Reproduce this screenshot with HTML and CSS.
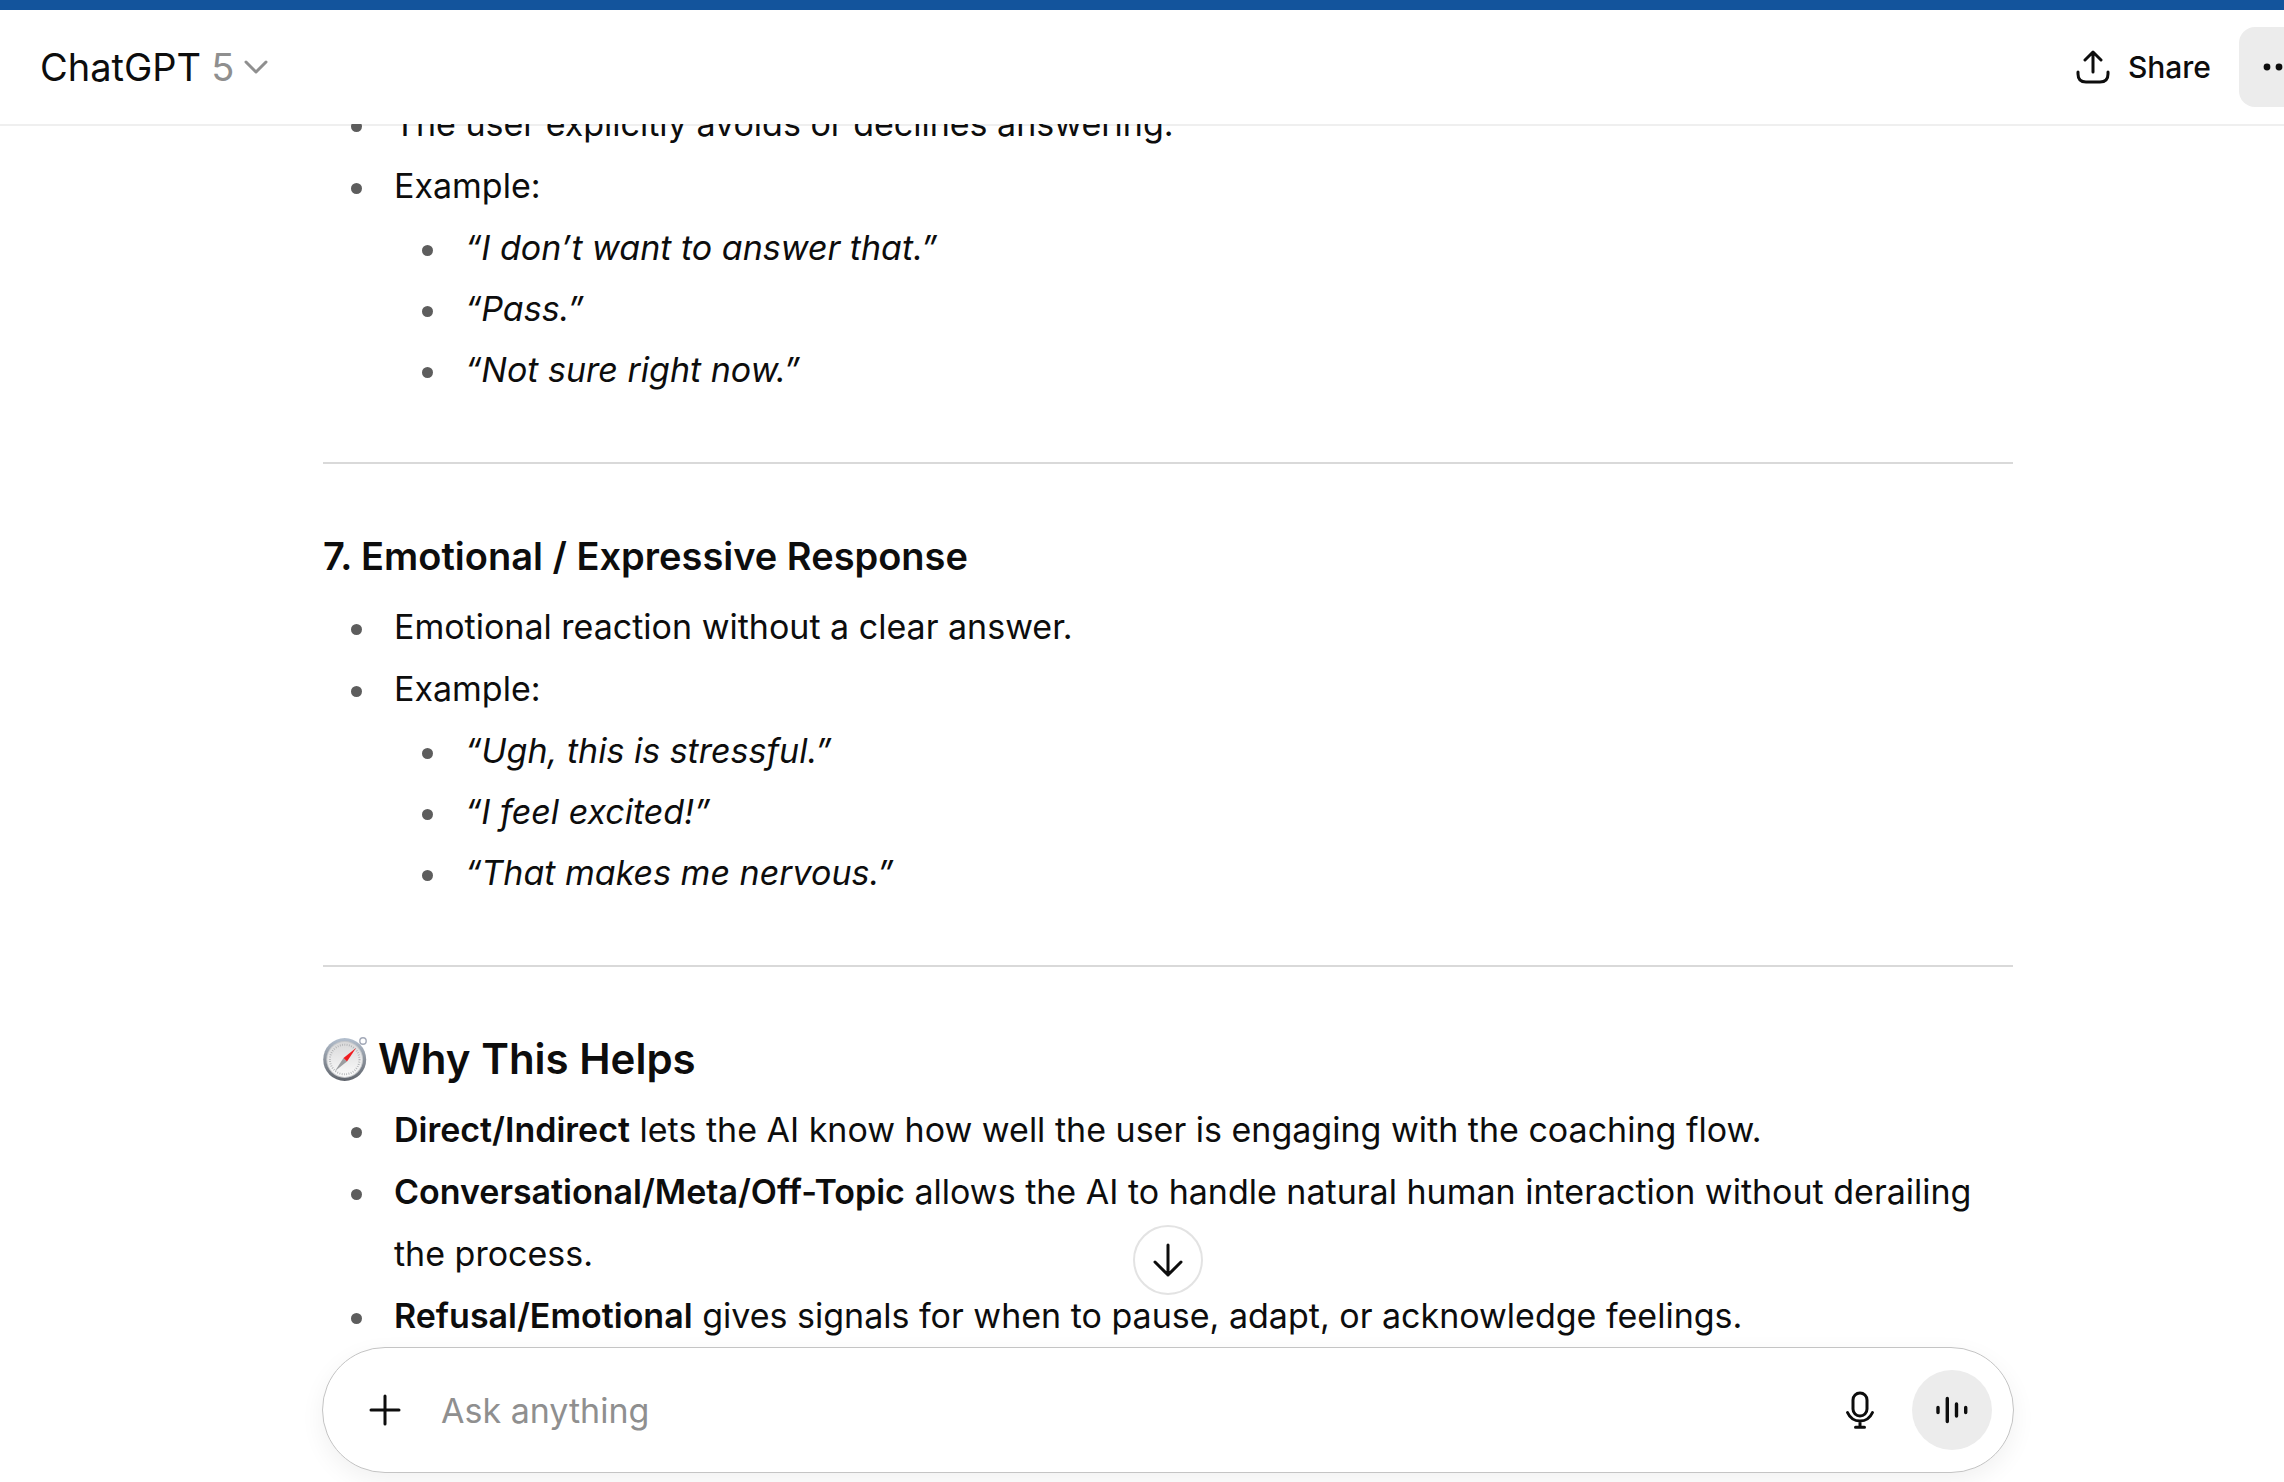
FILE: index.html
```html
<!DOCTYPE html>
<html lang="en">
<head>
<meta charset="utf-8">
<title>ChatGPT</title>
<link rel="stylesheet" href="styles.css">
</head>
<body>
<div class="app">
  <header class="topbar">
    <button class="model" type="button">
      <span>ChatGPT</span>
      <span class="model-version">5</span>
      <svg class="chevron" width="24" height="14" viewBox="0 0 24 14" fill="none" stroke="currentColor" stroke-width="3" stroke-linecap="round" stroke-linejoin="round" aria-hidden="true"><path d="M2 2l10 10L22 2"/></svg>
    </button>
    <div class="actions">
      <button class="share" type="button">
        <svg width="34" height="34" viewBox="0 0 34 34" fill="none" stroke="currentColor" stroke-width="3" stroke-linecap="round" stroke-linejoin="round" aria-hidden="true"><path d="M17 22V3M9 10l8-8 8 8M2 22v2q0 8 8 8h14q8 0 8-8v-2"/></svg>
        <span>Share</span>
      </button>
      <button class="more" type="button" aria-label="More options">
        <svg width="32" height="8" viewBox="0 0 32 8" fill="currentColor" aria-hidden="true"><circle cx="4" cy="4" r="3.4"/><circle cx="16" cy="4" r="3.4"/><circle cx="28" cy="4" r="3.4"/></svg>
      </button>
    </div>
  </header>

  <main class="chat">
    <article class="message">
      <ul class="list">
        <li>The user explicitly avoids or declines answering.</li>
        <li>Example:
          <ul class="sublist">
            <li><em>“I don’t want to answer that.”</em></li>
            <li><em>“Pass.”</em></li>
            <li><em>“Not sure right now.”</em></li>
          </ul>
        </li>
      </ul>
      <hr class="rule">
      <h3 class="subheading">7. Emotional / Expressive Response</h3>
      <ul class="list">
        <li>Emotional reaction without a clear answer.</li>
        <li>Example:
          <ul class="sublist">
            <li><em>“Ugh, this is stressful.”</em></li>
            <li><em>“I feel excited!”</em></li>
            <li><em>“That makes me nervous.”</em></li>
          </ul>
        </li>
      </ul>
      <hr class="rule">
      <h2 class="heading">
        <svg width="44" height="46" viewBox="0 0 44 46" aria-hidden="true">
          <defs>
            <linearGradient id="rim" x1="0" y1="0" x2="0" y2="1"><stop offset="0" stop-color="#b4c0cf"/><stop offset=".5" stop-color="#8b929c"/><stop offset="1" stop-color="#5f646c"/></linearGradient>
            <linearGradient id="face" x1="0" y1="0" x2="0" y2="1"><stop offset="0" stop-color="#d9d9da"/><stop offset="1" stop-color="#fbfbfb"/></linearGradient>
          </defs>
          <circle cx="40" cy="5" r="3.2" fill="none" stroke="#a3a9b8" stroke-width="1.4"/>
          <circle cx="21.7" cy="23.5" r="21.5" fill="url(#rim)"/>
          <circle cx="21.7" cy="23.5" r="18.4" fill="#c6c8cb"/>
          <circle cx="21.7" cy="23.5" r="17.4" fill="url(#face)"/>
          <circle cx="21.7" cy="23.5" r="14.8" fill="none" stroke="#aeb0b3" stroke-width="2" stroke-dasharray=".8 1.5"/>
          <path d="M12 35l8.500-13 3.500 3.500z" fill="#9b9da0"/>
          <path d="M20.500 22L33 12l-9 13.500z" fill="#f01c20"/>
        </svg>
        <span>Why This Helps</span>
      </h2>
      <ul class="list">
        <li><strong>Direct/Indirect</strong> lets the AI know how well the user is engaging with the coaching flow.</li>
        <li><strong>Conversational/Meta/Off-Topic</strong> allows the AI to handle natural human interaction without derailing the process.</li>
        <li><strong>Refusal/Emotional</strong> gives signals for when to pause, adapt, or acknowledge feelings.</li>
      </ul>
    </article>
  </main>

  <footer class="dock">
    <button class="jump" type="button" aria-label="Scroll to bottom">
      <svg width="32" height="34" viewBox="0 0 32 34" fill="none" stroke="currentColor" stroke-width="3" stroke-linecap="round" stroke-linejoin="round" aria-hidden="true"><path d="M16 2v30M3 19l13 13 13-13"/></svg>
    </button>
    <form class="composer">
      <button class="icon-button" type="button" aria-label="Add files">
        <svg width="32" height="32" viewBox="0 0 32 32" fill="none" stroke="currentColor" stroke-width="3" stroke-linecap="round" aria-hidden="true"><path d="M16 2v28M2 16h28"/></svg>
      </button>
      <input class="prompt" type="text" placeholder="Ask anything" aria-label="Ask anything">
      <button class="icon-button" type="button" aria-label="Dictate">
        <svg width="30" height="38" viewBox="0 0 30 38" fill="none" stroke="currentColor" stroke-width="3" stroke-linecap="round" aria-hidden="true"><rect x="8" y="2" width="14" height="23" rx="7"/><path d="M2.500 21.500C5 27 9.500 30 15 30s10-3 12.500-8.500M15 30v6M10.500 36.200h9"/></svg>
      </button>
      <button class="voice" type="button" aria-label="Use voice mode">
        <svg width="32" height="28" viewBox="0 0 32 28" fill="none" stroke="currentColor" stroke-width="3.400" stroke-linecap="round" aria-hidden="true"><path d="M2 11.500v5M11.300 2.500v23M20.500 8v12M29.700 11.500v5"/></svg>
      </button>
    </form>
  </footer>
</div>
</body>
</html>
```
FILE: styles.css
```css
* {
  box-sizing: border-box;
}

body {
  margin: 0;
  overflow: hidden;
  background: #fff;
  color: #0d0d0d;
  font-family: Inter, "Liberation Sans", sans-serif;
  font-size: 34px;
}

button {
  display: flex;
  align-items: center;
  justify-content: center;
  padding: 0;
  border: 0;
  background: none;
  color: inherit;
  font: inherit;
}

svg {
  display: block;
  flex: none;
}

/* The window is a little wider than the viewport */
.app {
  display: flex;
  flex-direction: column;
  height: 100vh;
  margin-right: -52px;
}

.topbar {
  display: flex;
  flex: none;
  align-items: center;
  justify-content: space-between;
  height: 124px;
  padding: 0 17px 0 40px;
  border-top: 10px solid #13549c;
}

.model {
  gap: 10px;
  font-size: 38px;
}

.model-version,
.chevron {
  color: #8f8f8f;
}

.actions {
  display: flex;
  align-items: center;
  gap: 28px;
}

.share {
  gap: 18px;
  font-size: 30px;
  font-weight: 500;
}

.more {
  width: 80px;
  height: 80px;
  border-radius: 16px;
  background: #ececec;
}

.chat {
  display: flex;
  flex: 1;
  flex-direction: column;
  align-items: center;
  justify-content: flex-end;
  min-height: 0;
  overflow: hidden;
  box-shadow: inset 0 2px #efefef;
}

.message {
  width: 100%;
  max-width: 1690px;
}

.list,
.sublist {
  margin: 0;
  padding: 0 0 0 71px;
  list-style: none;
  line-height: 62px;
}

.sublist {
  line-height: 61px;
}

.list li::before {
  content: "";
  display: inline-block;
  width: 11px;
  height: 11px;
  margin: 0 32px 0 -43px;
  border-radius: 50%;
  background: #5d5d5d;
  vertical-align: middle;
}

.list strong {
  font-weight: 600;
}

.rule {
  height: 2px;
  margin: 62px 0 67px;
  border: 0;
  background: #d9d9d9;
}

.subheading,
.heading {
  margin: 0 0 15px;
  font-weight: 600;
  line-height: 50px;
}

.subheading {
  font-size: 38px;
}

.heading {
  display: flex;
  align-items: center;
  gap: 11px;
  font-size: 42px;
}

.dock {
  position: relative;
  display: flex;
  flex: none;
  justify-content: center;
  padding-bottom: 9px;
}

.jump {
  position: absolute;
  bottom: 100%;
  left: 50%;
  width: 70px;
  height: 70px;
  margin: 0 0 52px -35px;
  border: 2px solid #e3e3e3;
  border-radius: 50%;
  background: #fff;
}

.composer {
  display: flex;
  align-items: center;
  width: 100%;
  max-width: 1692px;
  height: 126px;
  padding: 0 21px 0 30px;
  border: 1px solid #c4c4c4;
  border-radius: 63px;
  background: #fff;
  box-shadow: 0 8px 24px rgba(0, 0, 0, 0.06);
}

.icon-button {
  width: 64px;
  height: 64px;
}

.prompt {
  flex: 1;
  min-width: 0;
  padding: 0 24px;
  border: 0;
  outline: 0;
  background: none;
  color: inherit;
  font: inherit;
}

.prompt::placeholder {
  color: #8f8f8f;
  opacity: 1;
}

.voice {
  width: 80px;
  height: 80px;
  margin-left: 20px;
  border-radius: 50%;
  background: #ececec;
}
```
